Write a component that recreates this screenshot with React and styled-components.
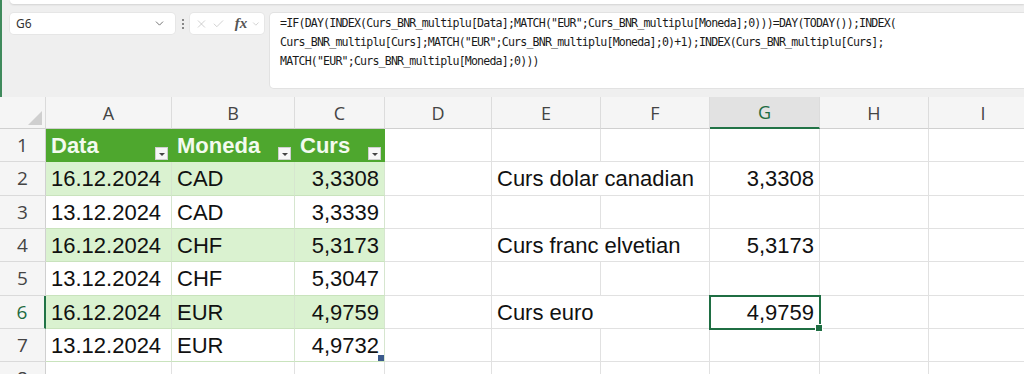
import React from 'react';
import styled, { createGlobalStyle } from 'styled-components';
import { X, Check, ChevronDown } from 'lucide-react';

const GlobalStyle = createGlobalStyle`
  html, body {
    margin: 0;
    padding: 0;
    background: #fff;
  }
  body {
    font-family: "Liberation Sans", Arial, sans-serif;
  }
`;

const Window = styled.div`
  width: 1024px;
  height: 374px;
  overflow: hidden;
  display: flex;
  flex-direction: column;
`;

const TopArea = styled.div`
  flex-shrink: 0;
  height: 97px;
  box-sizing: border-box;
  background: #efefef;
  border-left: 2px solid #3f8a5c;
  display: flex;
  flex-direction: column;
`;

const RibbonEdge = styled.div`
  height: 4px;
  margin-left: 8px;
  background: #fff;
  border-radius: 0 0 0 6px;
  box-shadow: 0 1px 2px rgba(0, 0, 0, 0.12);
`;

const FormulaBar = styled.div`
  display: flex;
  align-items: flex-start;
  padding: 9px 0 0 8px;
`;

const NameBox = styled.div`
  width: 165px;
  height: 21px;
  box-sizing: border-box;
  background: #fff;
  border-radius: 4px;
  display: flex;
  align-items: center;
  justify-content: space-between;
  padding: 0 9px 0 6px;
  font-family: "Noto Sans", "Open Sans", sans-serif;
  font-size: 12px;
  color: #333;
  box-shadow: 0 0 0 1px #e6e6e6;
`;

const Dots = styled.div`
  width: 15px;
  height: 21px;
  display: flex;
  flex-direction: column;
  align-items: center;
  justify-content: center;
  gap: 2px;

  span {
    width: 2px;
    height: 2px;
    border-radius: 1px;
    background: #666;
  }
`;

const ButtonGroup = styled.div`
  width: 74px;
  height: 21px;
  box-sizing: border-box;
  background: #fff;
  border-radius: 4px;
  display: flex;
  align-items: center;
  padding: 0 3px 0 5px;
  gap: 4px;
  color: #b8b8b8;
  box-shadow: 0 0 0 1px #e6e6e6;
`;

const Fx = styled.span`
  font-family: "Liberation Serif", "Times New Roman", serif;
  font-style: italic;
  font-weight: 700;
  font-size: 15px;
  color: #555;
  margin-left: 6px;
  line-height: 1;
`;

const FormulaBox = styled.div`
  flex: 1;
  height: 75px;
  margin-left: 6px;
  box-sizing: border-box;
  background: #fff;
  border-radius: 4px 0 0 4px;
  padding: 1px 10px 0 10px;
  box-shadow: 0 0 0 1px #e2e2e2;
  font-family: "DejaVu Sans Mono", "Liberation Mono", monospace;
  font-size: 11.6px;
  letter-spacing: -0.82px;
  line-height: 19px;
  color: #1a1a1a;
`;

const FormulaLine = styled.div`
  white-space: pre;
`;

const Sheet = styled.div`
  flex-shrink: 0;
  display: grid;
  grid-template-columns: 46px 126px 123px 90px 107px 109px 109px 110px 109px 109px;
  grid-template-rows: 32px repeat(8, 33.33px);
  background: #fff;
`;

const Corner = styled.div`
  background: #f5f5f5;
  border-right: 1px solid #dadada;
  border-bottom: 1px solid #d0d0d0;
  display: flex;
  align-items: flex-end;
  justify-content: flex-end;
  padding: 0 3px 3px 0;
`;

const ColHead = styled.div`
  box-sizing: border-box;
  background: ${(p) => (p.$active ? '#e2e2e2' : '#f5f5f5')};
  border-right: 1px solid #dcdcdc;
  border-bottom: ${(p) => (p.$active ? '2px solid #217346' : '1px solid #d0d0d0')};
  display: flex;
  align-items: center;
  justify-content: center;
  font-family: "Open Sans", "Noto Sans", sans-serif;
  font-size: 18px;
  color: ${(p) => (p.$active ? '#1e6b41' : '#444')};
`;

const RowHead = styled.div`
  box-sizing: border-box;
  background: #f5f5f5;
  border-right: ${(p) => (p.$active ? '2px solid #217346' : '1px solid #d0d0d0')};
  border-bottom: 1px solid #dadada;
  display: flex;
  align-items: center;
  justify-content: center;
  font-family: "Open Sans", "Noto Sans", sans-serif;
  font-size: 19px;
  color: ${(p) => (p.$active ? '#1e6b41' : '#444')};
`;

const bandColors = {
  head: '#4ea72e',
  even: '#daf2d0',
  odd: '#ffffff',
  none: '#ffffff',
};

const Cell = styled.div`
  position: relative;
  box-sizing: border-box;
  grid-column: span ${(p) => p.$span || 1};
  background: ${(p) => bandColors[p.$band || 'none']};
  border-right: 1px solid ${(p) => (p.$band === 'head' ? '#4ea72e' : p.$band && p.$band !== 'none' ? '#d6e6cf' : '#e1e1e1')};
  border-bottom: 1px solid ${(p) => (p.$band === 'head' ? '#4ea72e' : p.$band && p.$band !== 'none' ? '#c9e3bd' : '#e1e1e1')};
  display: flex;
  align-items: center;
  justify-content: ${(p) => (p.$align === 'right' ? 'flex-end' : 'space-between')};
  padding: 2px 5px 0 5px;
  white-space: nowrap;
  font-size: 22px;
  font-weight: ${(p) => (p.$band === 'head' ? 700 : 400)};
  color: ${(p) => (p.$band === 'head' ? '#f3faef' : '#111')};
  outline: ${(p) => (p.$selected ? '2px solid #1f6e43' : 'none')};
  outline-offset: -1px;
  z-index: ${(p) => (p.$selected ? 2 : 'auto')};
`;

const FilterButton = styled.span`
  align-self: flex-end;
  width: 13px;
  height: 13px;
  margin: 0 -2px 1px 4px;
  box-sizing: border-box;
  background: #f7f7f7;
  border: 1px solid #cfcfcf;
  display: flex;
  align-items: center;
  justify-content: center;

  &::after {
    content: '';
    border-left: 3px solid transparent;
    border-right: 3px solid transparent;
    border-top: 3px solid #444;
    margin-top: 1px;
  }
`;

const FillHandle = styled.span`
  position: absolute;
  right: ${(p) => (p.$outside ? '-4px' : '0')};
  bottom: ${(p) => (p.$outside ? '-4px' : '0')};
  width: 6px;
  height: 6px;
  background: ${(p) => p.$color};
  border: ${(p) => (p.$outside ? '1px solid #fff' : 'none')};
`;

const columns = ['A', 'B', 'C', 'D', 'E', 'F', 'G', 'H', 'I'];

const tableRows = [
  ['16.12.2024', 'CAD', '3,3308'],
  ['13.12.2024', 'CAD', '3,3339'],
  ['16.12.2024', 'CHF', '5,3173'],
  ['13.12.2024', 'CHF', '5,3047'],
  ['16.12.2024', 'EUR', '4,9759'],
  ['13.12.2024', 'EUR', '4,9732'],
];

const lookups = {
  2: ['Curs dolar canadian', '3,3308'],
  4: ['Curs franc elvetian', '5,3173'],
  6: ['Curs euro', '4,9759'],
};

const formula = [
  '=IF(DAY(INDEX(Curs_BNR_multiplu[Data];MATCH("EUR";Curs_BNR_multiplu[Moneda];0)))=DAY(TODAY());INDEX(',
  'Curs_BNR_multiplu[Curs];MATCH("EUR";Curs_BNR_multiplu[Moneda];0)+1);INDEX(Curs_BNR_multiplu[Curs];',
  'MATCH("EUR";Curs_BNR_multiplu[Moneda];0)))',
];

function SheetRow({ n }) {
  const cells = [];

  if (n === 1) {
    ['Data', 'Moneda', 'Curs'].forEach((h) =>
      cells.push(
        <Cell key={h} $band="head">
          <span>{h}</span>
          <FilterButton />
        </Cell>
      )
    );
  } else if (n <= 7) {
    const band = n % 2 === 0 ? 'even' : 'odd';
    const [date, cur, rate] = tableRows[n - 2];
    cells.push(<Cell key="a" $band={band}>{date}</Cell>);
    cells.push(<Cell key="b" $band={band}>{cur}</Cell>);
    cells.push(
      <Cell key="c" $band={band} $align="right">
        {rate}
        {n === 7 && <FillHandle $color="#3b5a8c" />}
      </Cell>
    );
  } else {
    cells.push(<Cell key="a" />, <Cell key="b" />, <Cell key="c" />);
  }

  cells.push(<Cell key="d" />);

  const lookup = lookups[n];
  if (lookup) {
    cells.push(<Cell key="ef" $span={2}>{lookup[0]}</Cell>);
    cells.push(
      <Cell key="g" $align="right" $selected={n === 6}>
        {lookup[1]}
        {n === 6 && <FillHandle $outside $color="#1f6e43" />}
      </Cell>
    );
  } else {
    cells.push(<Cell key="e" />, <Cell key="f" />, <Cell key="g" />);
  }

  cells.push(<Cell key="h" />, <Cell key="i" />);

  return (
    <>
      <RowHead $active={n === 6}>{n}</RowHead>
      {cells}
    </>
  );
}

export default function App() {
  return (
    <Window>
      <GlobalStyle />
      <TopArea>
        <RibbonEdge />
        <FormulaBar>
          <NameBox>
            <span>G6</span>
            <ChevronDown size={13} color="#555" strokeWidth={1.5} />
          </NameBox>
          <Dots>
            <span />
            <span />
            <span />
          </Dots>
          <ButtonGroup>
            <X size={16} strokeWidth={1.2} />
            <Check size={16} strokeWidth={1.2} />
            <Fx>fx</Fx>
            <ChevronDown size={12} strokeWidth={1.5} />
          </ButtonGroup>
          <FormulaBox>
            {formula.map((line) => (
              <FormulaLine key={line}>{line}</FormulaLine>
            ))}
          </FormulaBox>
        </FormulaBar>
      </TopArea>
      <Sheet>
        <Corner>
          <svg width="14" height="14" viewBox="0 0 14 14">
            <polygon points="14,0 14,14 0,14" fill="#cfcfcf" />
          </svg>
        </Corner>
        {columns.map((c) => (
          <ColHead key={c} $active={c === 'G'}>
            {c}
          </ColHead>
        ))}
        {[1, 2, 3, 4, 5, 6, 7, 8].map((n) => (
          <SheetRow key={n} n={n} />
        ))}
      </Sheet>
    </Window>
  );
}
